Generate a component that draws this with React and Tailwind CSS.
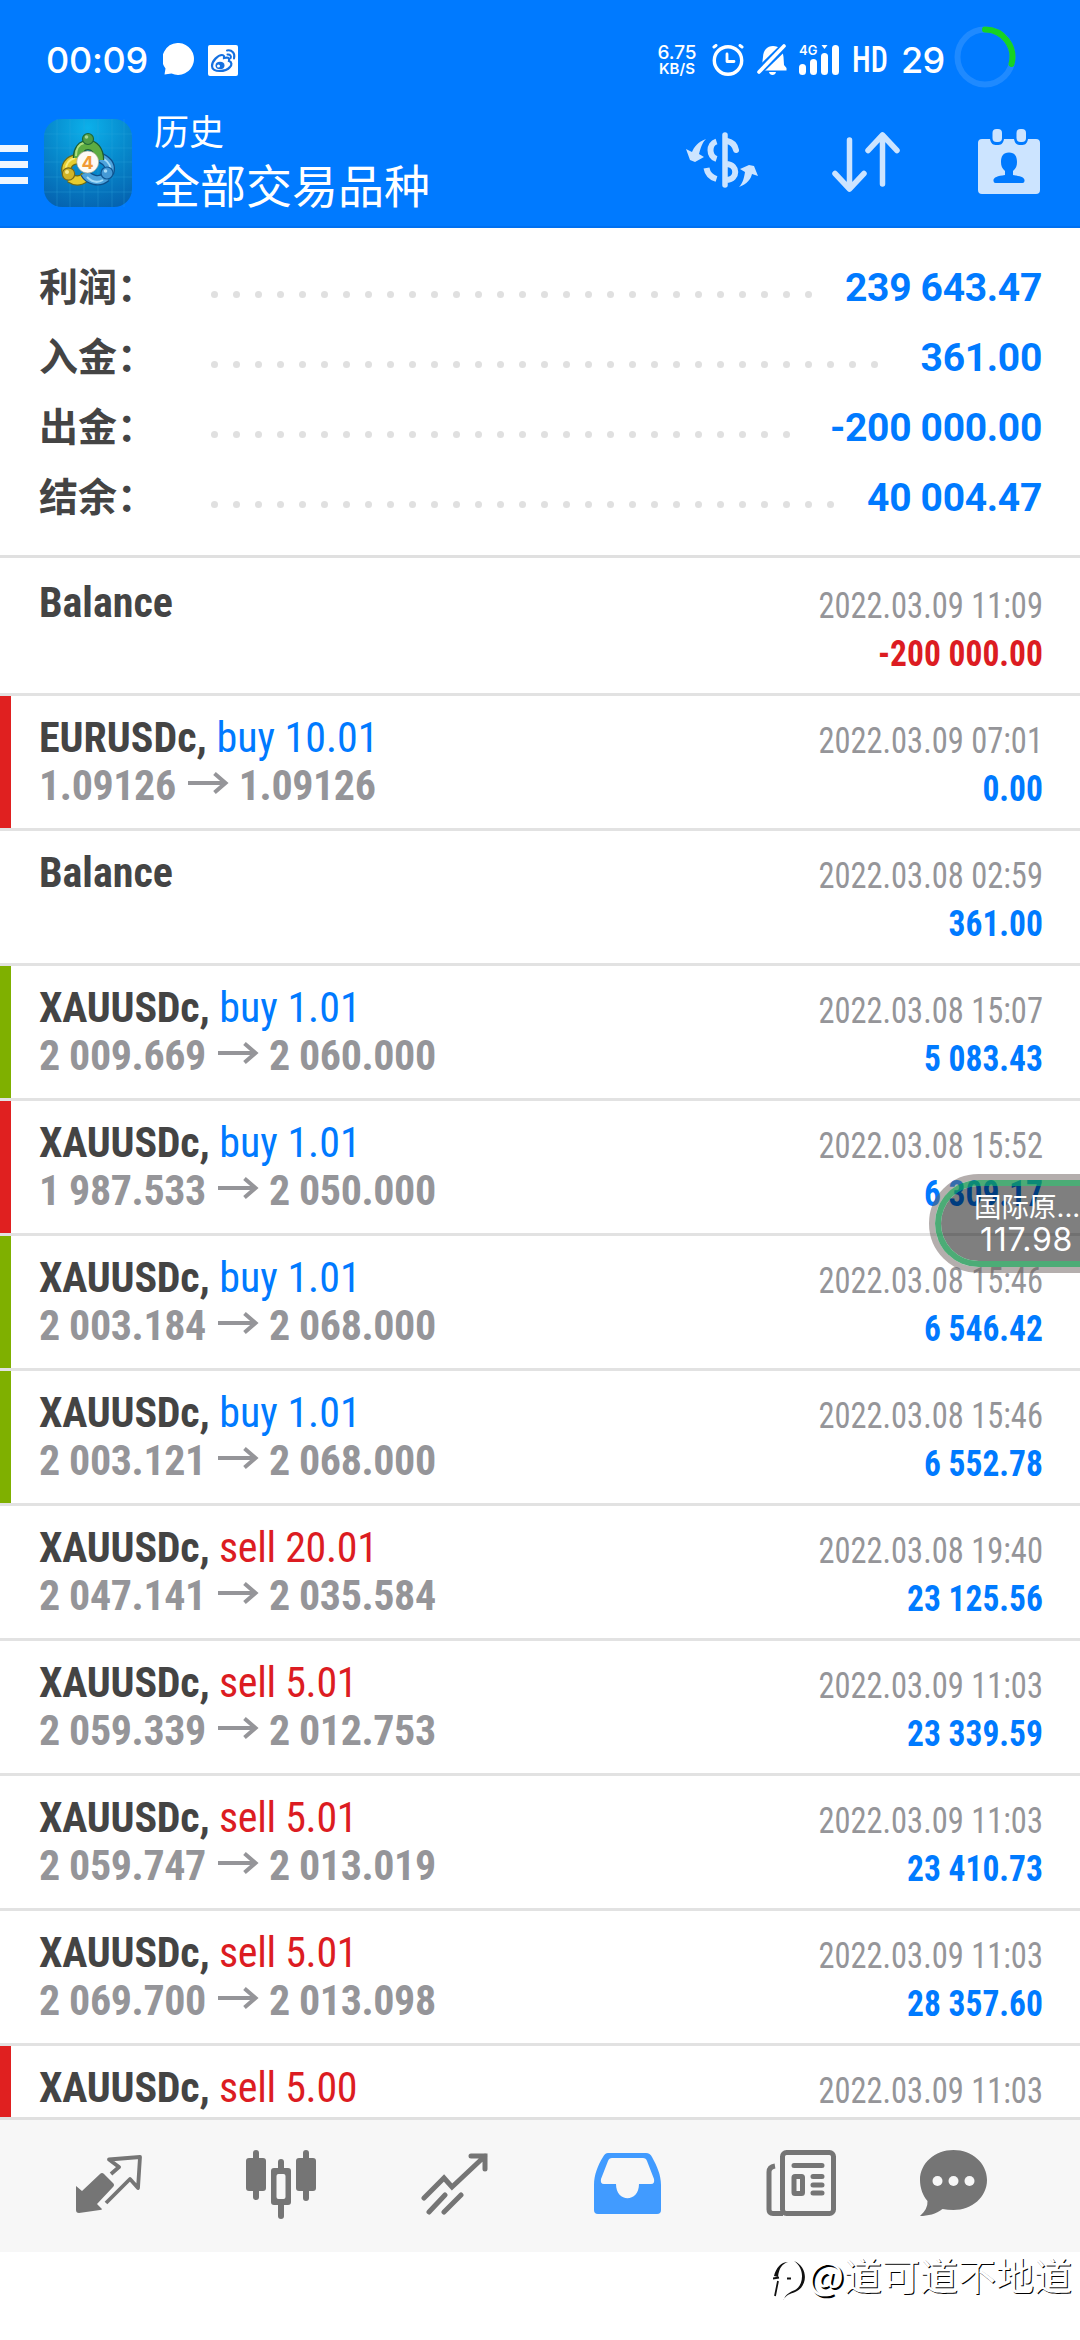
const summary = [
  { label: "利润：", value: "239 643.47" },
  { label: "入金：", value: "361.00" },
  { label: "出金：", value: "-200 000.00" },
  { label: "结余：", value: "40 004.47" },
];

const history = [
  { symbol: "Balance", time: "2022.03.09 11:09", profit: "-200 000.00" },
  { symbol: "EURUSDc", side: "buy", volume: "10.01", from: "1.09126", to: "1.09126", time: "2022.03.09 07:01", profit: "0.00", mark: "red" },
  { symbol: "Balance", time: "2022.03.08 02:59", profit: "361.00" },
  { symbol: "XAUUSDc", side: "buy", volume: "1.01", from: "2 009.669", to: "2 060.000", time: "2022.03.08 15:07", profit: "5 083.43", mark: "green" },
  { symbol: "XAUUSDc", side: "buy", volume: "1.01", from: "1 987.533", to: "2 050.000", time: "2022.03.08 15:52", profit: "6 309.17", mark: "red" },
  { symbol: "XAUUSDc", side: "buy", volume: "1.01", from: "2 003.184", to: "2 068.000", time: "2022.03.08 15:46", profit: "6 546.42", mark: "green" },
  { symbol: "XAUUSDc", side: "buy", volume: "1.01", from: "2 003.121", to: "2 068.000", time: "2022.03.08 15:46", profit: "6 552.78", mark: "green" },
  { symbol: "XAUUSDc", side: "sell", volume: "20.01", from: "2 047.141", to: "2 035.584", time: "2022.03.08 19:40", profit: "23 125.56" },
  { symbol: "XAUUSDc", side: "sell", volume: "5.01", from: "2 059.339", to: "2 012.753", time: "2022.03.09 11:03", profit: "23 339.59" },
  { symbol: "XAUUSDc", side: "sell", volume: "5.01", from: "2 059.747", to: "2 013.019", time: "2022.03.09 11:03", profit: "23 410.73" },
  { symbol: "XAUUSDc", side: "sell", volume: "5.01", from: "2 069.700", to: "2 013.098", time: "2022.03.09 11:03", profit: "28 357.60" },
  { symbol: "XAUUSDc", side: "sell", volume: "5.00", time: "2022.03.09 11:03", mark: "red" },
];

function StatusBar() {
  return (
    <div className="flex h-[114px] items-center pt-[6px] pl-[46px] text-white">
      <span className="w-[117px] text-[36px] leading-none font-medium tracking-[-0.3px]">00:09</span>
      <svg className="h-[34px] w-[32px]" viewBox="0 0 32 34">
        <path fill="#fff" d="M16 0a16 16 0 1 1-7.500 30.600L1.500 31.500l1-6A16 16 0 0 1 16 0Z" />
      </svg>
      <svg className="ml-[13px] h-[31px] w-[30px]" viewBox="0 0 30 31">
        <rect width="30" height="31" rx="2" fill="#fff" />
        <path fill="none" stroke="#1470e0" strokeWidth="2.200" d="M4 21c0-5 6-11 10-11 2.500 0 2 2 2 3 3-1 6-.5 5 3 3 1 3 4 1 6-4 5-18 6-18-1Z" />
        <ellipse cx="12" cy="20.500" rx="4.500" ry="3.700" fill="#1470e0" />
        <circle cx="10.500" cy="21" r="1.500" fill="#fff" />
        <path fill="none" stroke="#1470e0" strokeWidth="2" strokeLinecap="round" d="M19 5.500c5-1 8.500 3 7 8M19.500 9.500c2.500-.3 4 1.500 3.200 3.500" />
      </svg>

      <div className="ml-[420px] flex w-[38px] flex-col items-center leading-none">
        <span className="text-[19px] leading-[18px] font-medium">6.75</span>
        <span className="text-[15px] leading-[14px] font-semibold">KB/S</span>
      </div>
      <svg className="ml-[16px] h-[32px] w-[32px]" viewBox="0 0 32 32" fill="none" stroke="#fff" strokeLinecap="round">
        <circle cx="16" cy="16.500" r="13.700" strokeWidth="3.400" />
        <path strokeWidth="2.800" strokeLinejoin="round" d="M15 10v7.500h7" />
        <path strokeWidth="3" d="M2 3l2-1.500M30 3l-2-1.500" />
      </svg>
      <svg className="ml-[13px] h-[32px] w-[30px]" viewBox="0 0 30 32">
        <path fill="#fff" d="M16 2c6 0 10 4 10.500 11l.5 8 2.500 3v2.500H5.500L3 24l2-3 1-8C6.500 6 10 2 16 2Z" />
        <path fill="#fff" d="M12 28h7c-.5 4-6.500 4-7 0Z" />
        <path stroke="#007aff" strokeWidth="8" d="M-2 31 31-1" />
        <path stroke="#fff" strokeWidth="3.600" strokeLinecap="round" d="M2 28 27 2" />
      </svg>
      <div className="relative ml-[12px] h-[30px] w-[40px]">
        <span className="absolute -top-px left-0 text-[13px] leading-none font-semibold">4G</span>
        <svg className="h-[30px] w-[40px]" viewBox="0 0 40 30" fill="#fff">
          <rect x="0" y="19" width="7" height="11" rx="3.500" />
          <rect x="11" y="14" width="7" height="16" rx="3.500" />
          <rect x="22" y="8" width="7" height="22" rx="3.500" />
          <rect x="33" y="0" width="7" height="30" rx="3.500" />
          <path d="M22.500 0h6l-3 4Z" />
        </svg>
      </div>
      <span className="ml-[13px] w-[35px] origin-left scale-x-[.84] font-[Roboto] text-[36px] leading-none font-medium font-stretch-condensed">HD</span>
      <span className="ml-[14px] w-[45px] text-[36px] leading-none font-medium tracking-[-0.8px]">29</span>
      <svg className="-mt-[6px] ml-[8px] h-[62px] w-[62px]" viewBox="0 0 62 62" fill="none" strokeWidth="6">
        <circle cx="31" cy="31" r="27.500" stroke="#1f8aff" />
        <path stroke="#16d322" strokeLinecap="round" d="M31 3.500A27.500 27.500 0 0 1 57.500 38" />
      </svg>
    </div>
  );
}

function AppLogo() {
  return (
    <svg className="-mt-[3px] ml-[16px] h-[88px] w-[88px] shrink-0" viewBox="0 0 88 88">
      <defs>
        <radialGradient id="logoBg" cx="50%" cy="10%" r="95%">
          <stop offset="0" stopColor="#0cb0ea" />
          <stop offset="0.500" stopColor="#0789cc" />
          <stop offset="1" stopColor="#0563b0" />
        </radialGradient>
      </defs>
      <rect width="88" height="88" rx="18" fill="url(#logoBg)" />
      <path stroke="#2ea4dc" strokeOpacity=".3" d="M13 0v88M26 0v88M40 0v88M54 0v88M68 0v88M80 0v88M0 15h88M0 29h88M0 43h88M0 58h88M0 73h88" />
      <g fill="none" strokeLinejoin="round">
        <path stroke="#6b6a18" strokeWidth="10.500" d="M34 40c-10 1-13 8-11 14M26 59c6 4 12 3 16-2" />
        <path stroke="#e6cc2e" strokeWidth="8" d="M34 40c-10 1-13 8-11 14M26 59c6 4 12 3 16-2" />
        <path stroke="#f6ec7c" strokeWidth="2" d="M31 39c-7 2-9 6-9 11" />
        <path stroke="#0e4f8a" strokeWidth="10.500" d="M57 39c8 4 10 9 8 15M41 54c4 7 14 10 21 4" />
        <path stroke="#4da3dc" strokeWidth="8" d="M57 39c8 4 10 9 8 15M41 54c4 7 14 10 21 4" />
        <path stroke="#a5dbf7" strokeWidth="2" d="M60 40c6 4 7 9 6 12M43 58c5 5 11 6 16 3" />
        <path stroke="#1c5b33" strokeWidth="10.500" d="M34 39c0-8 4-13 10-13s11 5 11 15" />
        <path stroke="#5dac42" strokeWidth="8" d="M34 39c0-8 4-13 10-13s11 5 11 15" />
        <path stroke="#b0de7e" strokeWidth="2" d="M32 37c0-7 3-12 8-13" />
      </g>
      <circle cx="44" cy="20" r="5.500" fill="#4f9c47" stroke="#1e6738" strokeWidth="1.200" />
      <circle cx="24.500" cy="55" r="6.200" fill="#d0b428" stroke="#75681a" strokeWidth="1.200" />
      <circle cx="63" cy="54" r="6" fill="#4499d6" stroke="#125793" strokeWidth="1.200" />
      <circle cx="42.500" cy="18" r="1.800" fill="#a5d696" />
      <circle cx="23" cy="53" r="2" fill="#f4ea90" />
      <circle cx="61.500" cy="52" r="1.800" fill="#a6daf6" />
      <circle cx="43.700" cy="43" r="11" fill="#fdfaf4" stroke="#9a9a80" strokeWidth=".6" />
      <text x="43.700" y="49.500" textAnchor="middle" fontSize="18" fontWeight="700" fill="#f09a35">4</text>
    </svg>
  );
}

function Header() {
  return (
    <header className="h-[228px] shrink-0 border-b-2 border-[#0070f0] bg-[#007aff] font-[Inter,sans-serif]">
      <StatusBar />
      <div className="flex h-[100px] items-center">
        <div className="flex w-[28px] shrink-0 flex-col gap-[9px]">
          <span className="h-[7px] bg-[#eef6ff]" />
          <span className="h-[7px] bg-[#eef6ff]" />
          <span className="h-[7px] bg-[#eef6ff]" />
        </div>
        <AppLogo />
        <div className="-mt-[9px] ml-[22px] flex w-[500px] flex-col font-['Noto_Sans_CJK_SC',sans-serif] text-white">
          <span className="text-[35px] leading-[46px]">历史</span>
          <span className="text-[46px] leading-[60px]">全部交易品种</span>
        </div>
        <svg className="-mt-[8px] ml-[32px] h-[56px] w-[72px] shrink-0" viewBox="0 0 72 56" fill="none" stroke="#cce4ff">
          <path strokeWidth="5.500" strokeLinecap="round" d="M39 3v50" />
          <path strokeWidth="6" d="M41 9c5 1 8 4 9 9" strokeLinecap="round" />
          <path strokeWidth="6" d="M30.500 9.500c-8 2.500-8 15 0 17.500M41 32c11 1 11 15 0 16M20.500 36c1 6 5 9.500 10 11" />
          <path fill="#cce4ff" stroke="none" d="M20 7C12 10 8 15 6 20L0 17 4 28 9 30 18 25 13 22C15 15 16 11 20 7ZM53 55C61 52 65 47 66 42L72 44 68 34 63 33 54 37 59 40C58 46 57 51 53 55Z" />
        </svg>
        <svg className="-mt-[4px] ml-[74px] h-[60px] w-[68px] shrink-0" viewBox="0 0 68 60" fill="none" stroke="#cce4ff" strokeWidth="5.500" strokeLinecap="round" strokeLinejoin="round">
          <path d="M17.500 8v49M3 41.500 17.500 57 32 41.500M50.500 52V3M36 18.500 50.500 3 65 18.500" />
        </svg>
        <svg className="-mt-[5px] ml-[77px] h-[66px] w-[64px] shrink-0" viewBox="0 0 64 66">
          <path fill="#cce4ff" d="M5 10h8c1 5 3 6 7 6s6-1 7-6h10c1 5 3 6 7 6s6-1 7-6h8q4 0 4 4v47q0 4-4 4H5q-4 0-4-4V14q0-4 4-4Z" />
          <rect x="15.500" y="0" width="9.500" height="13" rx="4" fill="#cce4ff" />
          <rect x="39.500" y="0" width="9.500" height="13" rx="4" fill="#cce4ff" />
          <path fill="#007aff" d="M32 23.500c6 0 8 4 8 9.500 0 4-1 6-4 9v4c8 1 12 2.500 11.500 6q0 2-2 2h-27q-2 0-2-2C16 48.500 20 47 28 46v-4c-3-3-4-5-4-9 0-5.500 2-9.500 8-9.500Z" />
        </svg>
      </div>
    </header>
  );
}

function SummaryRow({ label, value }) {
  return (
    <div className="flex h-[70px] items-center">
      <span className="-mt-[6px] w-[164px] shrink-0 font-['Noto_Sans_CJK_SC',sans-serif] text-[39px] leading-none font-bold text-[#444]">{label}</span>
      <div className="mt-[14px] flex h-[7px] flex-1 flex-wrap overflow-hidden">
        {Array.from({ length: 32 }, (_, i) => (
          <span key={i} className="mx-[7.5px] size-[7px] rounded-full bg-[#e0e0e0]" />
        ))}
      </div>
      <span className="mt-[2px] ml-[18px] text-[39px] leading-none font-bold tracking-[-0.3px] text-[#007aff]">{value}</span>
    </div>
  );
}

function Arrow() {
  return (
    <svg className="mr-[10px] ml-[12px] inline-block h-[22px] w-[41px] align-[6px]" viewBox="0 0 41 22" fill="none" stroke="#959599" strokeWidth="4">
      <path d="M0 11h38M26.500 1.500l11 9.500-11 9.500" />
    </svg>
  );
}

function HistoryRow({ item }) {
  const { symbol, side, volume, from, to, time, profit, mark } = item;
  const markColor = mark === "red" ? "bg-[#e02020]" : mark === "green" ? "bg-[#7fb000]" : "";
  const sideColor = side === "buy" ? "text-[#007aff]" : "text-[#dc1c22] tracking-[-0.3px]";
  const profitColor = profit?.startsWith("-") ? "text-[#dc1c22]" : "text-[#007aff]";

  return (
    <div className="flex h-[135px] shrink-0 border-b-3 border-[#e2e2e2] font-stretch-condensed">
      <span className={`w-[11px] shrink-0 ${markColor}`} />
      <div className="flex flex-1 justify-between pt-[18px] pr-[37px] pl-[28px]">
        <div className="text-[42px] leading-[48px] whitespace-nowrap">
          <div className="text-[#444]">
            <b className={symbol === "XAUUSDc" ? "tracking-[-0.2px]" : ""}>{side ? `${symbol},` : symbol}</b>
            {side && <span className={sideColor}> {side} {volume}</span>}
          </div>
          {from && (
            <div className="font-bold tracking-[-0.4px] text-[#959599]">
              {from}
              <Arrow />
              {to}
            </div>
          )}
        </div>
        <div className="pt-[3px] text-right text-[36px] leading-[48px] whitespace-nowrap">
          <div className="origin-right scale-x-[.902] text-[#959599]">{time}</div>
          {profit && <div className={`origin-right scale-x-[.93] font-bold ${profitColor}`}>{profit}</div>}
        </div>
      </div>
    </div>
  );
}

// Price ticker docked to the right edge, floats over the list
function FloatingTicker() {
  return (
    <div className="absolute top-[1174px] right-0 h-[99px] w-[151px] overflow-hidden font-[Inter,'Noto_Sans_CJK_SC',sans-serif] text-white">
      <div className="h-[99px] w-[220px] rounded-full border-6 border-[#6a5e5c]/50">
        <div className="h-full rounded-full border-6 border-[#109048]/75 bg-black/50 bg-clip-padding">
          <div className="pt-[5px] pl-[33px] text-[27.5px] leading-[32px] whitespace-nowrap">国际原...</div>
          <div className="pl-[39px] text-[32px] leading-[34px] tracking-[0.7px]">117.98</div>
        </div>
      </div>
    </div>
  );
}

function BottomNav() {
  return (
    <nav className="flex h-[135px] shrink-0 items-start border-t-3 border-[#e0e0e0] bg-[#f7f7f7] pt-[30px] pl-[75px]">
      <svg className="mt-[5px] h-[60px] w-[67px]" viewBox="0 0 67 60">
        <path fill="#757575" d="M1 31l6 5 18-17q2-2 4 0l9 9q2 2 0 4L22 49l5 5q0 1-2 1L4 58q-3 0-3-3Z" />
        <path fill="none" stroke="#757575" strokeWidth="3.800" strokeLinejoin="round" d="M31 48 55 24l8 9 2-31-31 2.500 10 7.500-8 7" />
      </svg>
      <svg className="ml-[104px] h-[69px] w-[70px]" viewBox="0 0 70 69" fill="#757575">
        <rect x="7" y="0" width="6" height="50" rx="3" />
        <rect x="0" y="8" width="20" height="33" rx="3" />
        <rect x="57" y="0" width="6" height="51" rx="3" />
        <rect x="50" y="8" width="20" height="33" rx="3" />
        <rect x="32" y="9" width="6" height="60" rx="3" />
        <rect x="25" y="18" width="20" height="37" rx="3" />
        <rect x="30.500" y="24" width="9" height="25" rx="2" fill="#f7f7f7" />
      </svg>
      <svg className="mt-[3px] ml-[105px] h-[62px] w-[67px]" viewBox="0 0 67 62" fill="none" stroke="#757575" strokeWidth="5" strokeLinecap="round">
        <path d="M3 45 23 25l8 9L64 3M50 3h14v13M8 59l16-17M23 59l17-17" />
      </svg>
      <svg className="mt-[3px] ml-[106px] h-[61px] w-[67px]" viewBox="0 0 67 61">
        <path fill="#419bff" fillRule="evenodd" d="M14 0h38q4 0 6 4c5 9 9 18 9 28v25q0 4-4 4H4q-4 0-4-4V32C0 22 4 12 9 4q2-4 5-4ZM18 5q-3 0-4 3L7 26q-1 5 3 5h12c0 19 23 19 23 0h12q4 0 3-5L53 8q-1-3-4-3Z" />
      </svg>
      <svg className="ml-[105px] h-[66px] w-[70px]" viewBox="0 0 70 66" fill="none" stroke="#757575" strokeWidth="5">
        <rect x="16.500" y="2.500" width="51" height="61" rx="4" />
        <path strokeLinecap="round" d="M28 15.500h28M47 26.500h9M47 35h9M47 43h9" />
        <path d="M17 63.500H7q-4 0-4-4V22q0-5 6-6" />
        <rect x="28" y="26.500" width="8.500" height="17" rx="1" />
      </svg>
      <svg className="ml-[84px] h-[66px] w-[67px]" viewBox="0 0 67 66">
        <path fill="#757575" d="M33.500 0C52 0 67 13 67 30S52 60 33.500 60q-6 0-11-1C16 64 8 66 0 66q8-7 7.500-15C3 46 0 38 0 30 0 13 15 0 33.500 0Z" />
        <circle cx="17.500" cy="31" r="5" fill="#f7f7f7" />
        <circle cx="33.500" cy="31" r="5" fill="#f7f7f7" />
        <circle cx="49.500" cy="31" r="5" fill="#f7f7f7" />
      </svg>
    </nav>
  );
}

function Watermark() {
  return (
    <div className="flex h-[44px] items-center justify-end pr-[8px] font-['Noto_Sans_CJK_SC',sans-serif] text-[38px] leading-none text-white [text-shadow:1px_1px_0_#000]">
      <svg className="mt-[14px] h-[42px] w-[32px]" viewBox="0 0 32 42">
        <path fill="none" stroke="#111" strokeWidth="1.800" d="M0 18.500l6-1M5 21 2 36M14 18.500h4" />
        <path fill="#111" d="M1 16C3 8 8 2 15 2 9 4 6 8 5 17ZM21 1c14 6 14 24 3 30-5 3-9 2-14 9l1-1c2-5 6-7 11-9 8-4 11-21-1-29Z" />
      </svg>
      <span className="ml-[3px] [text-shadow:2px_2px_0_#000]">@</span>
      <span>道可道不地道</span>
    </div>
  );
}

export default function App() {
  return (
    <div className="relative flex h-[2340px] w-[1080px] flex-col overflow-hidden bg-white font-['Roboto_Condensed',Roboto,sans-serif]">
      <Header />
      <section className="h-[330px] shrink-0 border-b-3 border-[#e0e0e0] pt-[24px] pr-[38px] pl-[39px] font-[Roboto,sans-serif]">
        {summary.map((row) => (
          <SummaryRow key={row.label} {...row} />
        ))}
      </section>
      <main className="flex h-[1559px] shrink-0 flex-col overflow-hidden pt-[3px]">
        {history.map((item, i) => (
          <HistoryRow key={i} item={item} />
        ))}
      </main>
      <BottomNav />
      <Watermark />
      <FloatingTicker />
    </div>
  );
}
